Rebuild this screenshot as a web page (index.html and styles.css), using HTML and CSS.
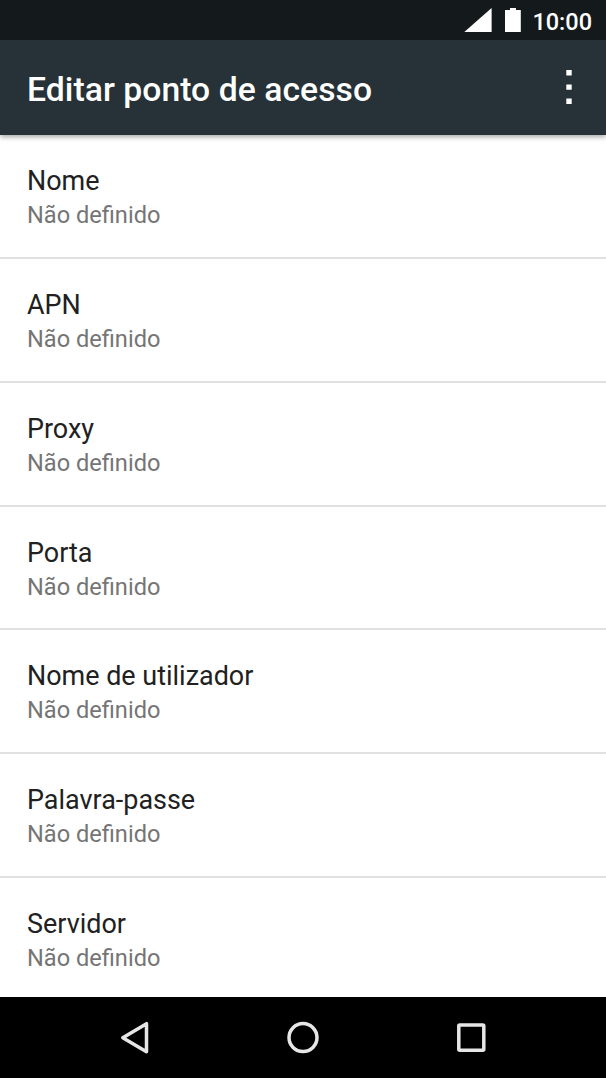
FILE: index.html
```html
<!DOCTYPE html>
<html lang="pt">
<head>
<meta charset="utf-8">
<title>Editar ponto de acesso</title>
<link rel="stylesheet" href="styles.css">
</head>
<body>
<div class="screen">
  <div class="status">
    <svg class="signal" width="28" height="24" viewBox="0 0 28 24"><path d="M27.600 0V24H0.300Z"/></svg>
    <svg class="battery" width="16" height="24" viewBox="0 0 16 24"><path d="M5 0H11V2H15.800V24H0V2H5Z"/></svg>
    <span class="clock">10:00</span>
  </div>
  <header class="appbar">
    <h1 class="title">Editar ponto de acesso</h1>
    <svg class="more" width="6" height="34" viewBox="0 0 6 34"><path d="M.300 0H5.700V5.400H.300ZM.300 14.400H5.700V19.800H.300ZM.300 28.600H5.700V34H.300Z"/></svg>
  </header>
  <main class="list">
    <section class="item"><div class="name">Nome</div><div class="value">Não definido</div></section>
    <section class="item"><div class="name">APN</div><div class="value">Não definido</div></section>
    <section class="item"><div class="name">Proxy</div><div class="value">Não definido</div></section>
    <section class="item"><div class="name">Porta</div><div class="value">Não definido</div></section>
    <section class="item"><div class="name">Nome de utilizador</div><div class="value">Não definido</div></section>
    <section class="item"><div class="name">Palavra-passe</div><div class="value">Não definido</div></section>
    <section class="item"><div class="name">Servidor</div><div class="value">Não definido</div></section>
  </main>
  <nav class="navbar">
    <svg width="606" height="81" viewBox="0 0 606 81"><path d="M146.500 26.700V54.700L122.800 40.700Z"/><circle cx="303" cy="40.600" r="14"/><rect x="458.800" y="28" width="25" height="25.200" rx="1"/></svg>
  </nav>
</div>
</body>
</html>
```
FILE: styles.css
```css
body { margin: 0; font-family: Roboto, sans-serif; }
.screen { width: 606px; height: 1078px; display: flex; flex-direction: column; overflow: hidden; background: #fff; }
.status { height: 40px; flex: none; display: flex; align-items: center; justify-content: flex-end; box-sizing: border-box; padding-right: 14px; background: #14191c; fill: #fff; }
.battery { margin-left: 13px; }
.clock { margin-left: 11px; padding-top: 3px; font-size: 23.500px; line-height: 40px; font-weight: 500; color: #fff; }
.appbar { height: 95px; flex: none; display: flex; align-items: center; justify-content: space-between; box-sizing: border-box; padding: 0 34px 0 27px; background: #263238; box-shadow: 0 2px 5px rgba(0,0,0,.35); fill: #fff; position: relative; z-index: 1; clip-path: inset(0 0 -12px 0); }
.title { margin: 4px 0 0; font-size: 33.700px; line-height: 40px; font-weight: 500; color: #fff; white-space: nowrap; letter-spacing: .05px; }
.more { margin-top: -1px; }
.list { flex: 1; min-height: 0; overflow: hidden; }
.item { height: 123.850px; box-sizing: border-box; padding: 28px 27px 0; border-bottom: 2px solid #e1e1e1; }
.name { font-size: 26.950px; line-height: 36px; color: #212121; }
.value { font-size: 23.600px; line-height: 32px; color: #757575; }
.navbar { height: 81px; flex: none; background: #000; fill: none; stroke: #e6e6e6; stroke-width: 3.500; stroke-linejoin: round; }
.navbar svg { display: block; }
```
